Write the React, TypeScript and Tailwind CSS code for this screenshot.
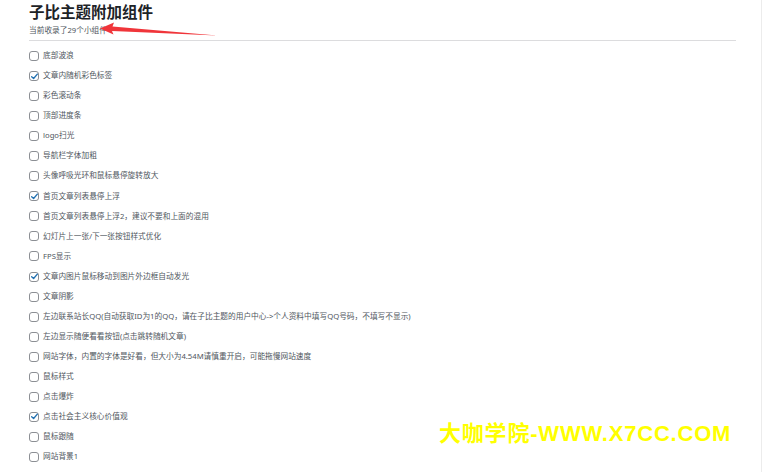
import React from "react";

const items: { label: string; checked: boolean }[] = [
  { label: "底部波浪", checked: false },
  { label: "文章内随机彩色标签", checked: true },
  { label: "彩色滚动条", checked: false },
  { label: "顶部进度条", checked: false },
  { label: "logo扫光", checked: false },
  { label: "导航栏字体加粗", checked: false },
  { label: "头像呼吸光环和鼠标悬停旋转放大", checked: false },
  { label: "首页文章列表悬停上浮", checked: true },
  { label: "首页文章列表悬停上浮2，建议不要和上面的混用", checked: false },
  { label: "幻灯片上一张/下一张按钮样式优化", checked: false },
  { label: "FPS显示", checked: false },
  { label: "文章内图片鼠标移动到图片外边框自动发光", checked: true },
  { label: "文章阴影", checked: false },
  {
    label:
      "左边联系站长QQ(自动获取ID为1的QQ，请在子比主题的用户中心->个人资料中填写QQ号码，不填写不显示)",
    checked: false,
  },
  { label: "左边显示随便看看按钮(点击跳转随机文章)", checked: false },
  { label: "网站字体，内置的字体是好看，但大小为4.54M请慎重开启，可能拖慢网站速度", checked: false },
  { label: "鼠标样式", checked: false },
  { label: "点击爆炸", checked: false },
  { label: "点击社会主义核心价值观", checked: true },
  { label: "鼠标跟随", checked: false },
  { label: "网站背景1", checked: false },
];

function Box({ checked }: { checked: boolean }) {
  return (
    <span className="relative flex h-[10px] w-[10px] shrink-0 items-center justify-center rounded-[3px] border border-[#8c8f94] bg-white">
      {checked && (
        <svg viewBox="0 0 12 12" className="absolute left-[-0.5px] top-[-0.5px] h-[9px] w-[9px]">
          <path d="M2.2 6.2 L4.8 8.6 L9.8 2.8" fill="none" stroke="#2271b1" strokeWidth="1.8" strokeLinecap="round" strokeLinejoin="round" />
        </svg>
      )}
    </span>
  );
}

export default function App() {
  return (
    <div
      className="relative h-[472px] w-[762px] overflow-hidden border-r border-[#ececec] bg-white"
      style={{ fontFamily: '"Noto Sans", "Noto Sans CJK SC", sans-serif' }}
    >
      <div className="pl-[29px] pr-[25px]">
        <h1 className="h-[22px] pt-[1px] text-[15.5px] font-bold leading-[22px] text-[#1d2327]">子比主题附加组件</h1>
        <p className="h-[16px] text-[7.7px] leading-[16px] text-[#50575e]">当前收录了29个小组件</p>
        <div className="mt-[2px] h-px bg-[#dcdcde]" />
        <div className="flex flex-col pt-[5px]">
          {items.map((it, i) => (
            <div key={i} className="flex h-[20.05px] items-center gap-[4px]">
              <Box checked={it.checked} />
              <span className="whitespace-nowrap text-[7.7px] leading-none text-[#50575e]">{it.label}</span>
            </div>
          ))}
        </div>
      </div>

      <svg className="absolute left-0 top-0" width="762" height="60" viewBox="0 0 762 60">
        <polygon points="100,28.5 114,22.5 112.5,26.5 217,35.5 112,31 113.5,34.5" fill="#f0353a" />
      </svg>

      <div
        className="absolute left-[439px] top-[421px] whitespace-nowrap text-[22px] font-bold leading-[26px] tracking-[0.8px] text-[#ffff00]"
        style={{ fontFamily: '"Liberation Sans", "Noto Sans CJK SC", sans-serif' }}
      >
        大咖学院-WWW.X7CC.COM
      </div>
    </div>
  );
}
